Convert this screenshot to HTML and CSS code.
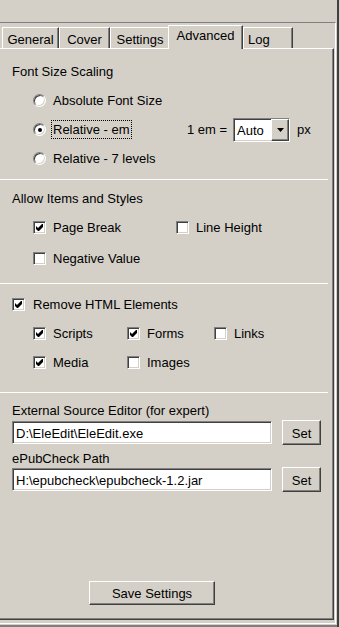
FILE: index.html
```html
<!DOCTYPE html>
<html>
  <head>
    <meta charset="utf-8">
    <title>Advanced Settings</title>
    <link rel="stylesheet" href="styles.css">
  </head>
  <body>
    <div class="window">
      <div class="frame">
        <!-- TABS -->
        <div class="tabs">
          <div class="tab tab-general">General</div>
          <div class="tab tab-cover">Cover</div>
          <div class="tab tab-settings">Settings</div>
          <div class="tab tab-advanced active">Advanced</div>
          <div class="tab tab-log">Log</div>
        </div>
        <!-- PANEL -->
        <div class="panel">
          <!-- FONT SIZE SCALING -->
          <div class="group group-font">
            <div class="group-title">Font Size Scaling</div>
            <div class="options radios">
              <div class="row">
                <div class="opt"><span class="radio"></span><span>Absolute Font Size</span></div>
              </div>
              <div class="row">
                <div class="opt opt-em"><span class="radio checked"></span><span class="focus">Relative - em</span></div>
                <span class="em-label">1 em =</span>
                <div class="em-select">
                  <div class="em-value">Auto</div>
                  <div class="em-arrow">
                    <svg width="7" height="4" viewBox="0 0 7 4"><polygon points="0,0 7,0 3.5,4" fill="#000"/></svg>
                  </div>
                </div>
                <span class="em-unit">px</span>
              </div>
              <div class="row">
                <div class="opt"><span class="radio"></span><span>Relative - 7 levels</span></div>
              </div>
            </div>
          </div>
          <div class="rule"></div>
          <!-- ALLOW ITEMS -->
          <div class="group group-items">
            <div class="group-title">Allow Items and Styles</div>
            <div class="options sub">
              <div class="row row-tall">
                <div class="opt col-wide"><span class="check checked"><svg width="11" height="11" viewBox="0 0 11 11"><polygon points="2,4 4,6 8,2 9,2 9,5 5,9 4,9 2,7" fill="#000"/></svg></span><span>Page Break</span></div>
                <div class="opt"><span class="check"></span><span>Line Height</span></div>
              </div>
              <div class="row row-tall">
                <div class="opt"><span class="check"></span><span>Negative Value</span></div>
              </div>
            </div>
          </div>
          <div class="rule"></div>
          <!-- REMOVE HTML ELEMENTS -->
          <div class="group group-remove">
            <div class="row">
              <div class="opt opt-main"><span class="check checked"><svg width="11" height="11" viewBox="0 0 11 11"><polygon points="2,4 4,6 8,2 9,2 9,5 5,9 4,9 2,7" fill="#000"/></svg></span><span>Remove HTML Elements</span></div>
            </div>
            <div class="sub">
              <div class="row">
                <div class="opt col-a"><span class="check checked"><svg width="11" height="11" viewBox="0 0 11 11"><polygon points="2,4 4,6 8,2 9,2 9,5 5,9 4,9 2,7" fill="#000"/></svg></span><span>Scripts</span></div>
                <div class="opt col-b"><span class="check checked"><svg width="11" height="11" viewBox="0 0 11 11"><polygon points="2,4 4,6 8,2 9,2 9,5 5,9 4,9 2,7" fill="#000"/></svg></span><span>Forms</span></div>
                <div class="opt"><span class="check"></span><span>Links</span></div>
              </div>
              <div class="row">
                <div class="opt col-a"><span class="check checked"><svg width="11" height="11" viewBox="0 0 11 11"><polygon points="2,4 4,6 8,2 9,2 9,5 5,9 4,9 2,7" fill="#000"/></svg></span><span>Media</span></div>
                <div class="opt col-b"><span class="check"></span><span>Images</span></div>
              </div>
            </div>
          </div>
          <div class="rule"></div>
          <!-- PATHS -->
          <div class="group group-paths">
            <div class="path-label">External Source Editor (for expert)</div>
            <div class="path-row">
              <div class="path-input">D:\EleEdit\EleEdit.exe</div>
              <div class="btn btn-set">Set</div>
            </div>
            <div class="path-label path-label-2">ePubCheck Path</div>
            <div class="path-row path-row-2">
              <div class="path-input">H:\epubcheck\epubcheck-1.2.jar</div>
              <div class="btn btn-set">Set</div>
            </div>
          </div>
          <div class="btn btn-save">Save Settings</div>
        </div>
      </div>
      <div class="ledge"></div>
    </div>
  </body>
</html>
```

FILE: styles.css
```css
/* BASE - classic windows look */
html, body { margin: 0; padding: 0; }
body {
  width: 340px;
  height: 627px;
  overflow: hidden;
  background: #d4d0c8;
  color: #000;
  font-family: "Liberation Sans", Arial, sans-serif;
  font-size: 13px;
  line-height: 15px;
}
.window {
  width: 339px;
  height: 627px;
  box-sizing: border-box;
  padding-top: 22px;
  border-right: 2px solid #404040;
}
.frame {
  width: 336px;
  box-sizing: border-box;
  border-top: 1px solid #808080;
  border-right: 1px solid #fff;
  border-bottom: 1px solid #fff;
  padding-bottom: 3px;
}
.ledge {
  margin-top: 1px;
  height: 2px;
  background: #808080;
}
/* TABS */
.tabs {
  display: flex;
  align-items: flex-end;
  height: 25px;
  padding-left: 2px;
}
.tab {
  height: 21px;
  box-sizing: border-box;
  border-top: 1px solid #fff;
  border-left: 1px solid #fff;
  border-right: 1px solid #404040;
  box-shadow: inset -1px 0 #808080;
  padding-top: 4px;
  text-align: center;
  background: #d4d0c8;
}
.tab-general { width: 57px; }
.tab-cover { width: 51px; }
.tab-settings { width: 60px; }
.tab-log { width: 50px; text-align: left; padding-left: 4px; }
.tab.active {
  width: 75px;
  height: 24px;
  margin-left: -2px;
  margin-bottom: -1px;
  padding-top: 2px;
  position: relative;
  z-index: 1;
}
/* PANEL */
.panel {
  width: 334px;
  height: 572px;
  box-sizing: border-box;
  border-top: 1px solid #fff;
  border-right: 1px solid #404040;
  border-bottom: 1px solid #404040;
  box-shadow: inset -1px -1px #808080;
  display: flex;
  flex-direction: column;
}
.rule {
  height: 1px;
  background: #fff;
  margin-right: 5px;
}
.group { padding-left: 12px; }
.group-font { padding-top: 15px; padding-bottom: 6px; }
.group-items { padding-top: 11px; padding-bottom: 9px; }
.group-remove { padding-top: 6px; padding-bottom: 15px; }
.group-paths { padding-top: 10px; }
.options { margin-top: 7px; }
.group-items .options { margin-top: 6px; }
.radios { padding-left: 21px; }
.sub { padding-left: 21px; }
.row {
  display: flex;
  align-items: center;
  height: 29px;
}
.row-tall { height: 31px; }
.opt {
  display: flex;
  align-items: center;
  gap: 7px;
}
.opt-main { gap: 8px; }
.col-wide { width: 143px; }
.col-a { width: 94px; }
.col-b { width: 87px; }
/* RADIO + CHECK */
.radio {
  width: 13px;
  height: 13px;
  box-sizing: border-box;
  border-radius: 50%;
  background: #fff;
  border: 1px solid;
  border-color: #808080 #fff #fff #808080;
  box-shadow: inset 1px 1px #404040, inset -1px -1px #d4d0c8;
  display: flex;
  align-items: center;
  justify-content: center;
  flex: none;
}
.radio.checked::after {
  content: "";
  width: 4px;
  height: 4px;
  border-radius: 50%;
  background: #000;
}
.check {
  width: 13px;
  height: 13px;
  box-sizing: border-box;
  background: #fff;
  border: 1px solid;
  border-color: #808080 #fff #fff #808080;
  box-shadow: inset 1px 1px #404040, inset -1px -1px #d4d0c8;
  flex: none;
}
.check svg { display: block; }
.focus {
  outline: 1px dotted #000;
  outline-offset: 1px;
}
/* EM SELECT */
.opt-em { width: 154px; }
.em-select {
  margin-left: 6px;
  width: 57px;
  height: 24px;
  box-sizing: border-box;
  display: flex;
  background: #fff;
  border: 1px solid;
  border-color: #808080 #fff #fff #808080;
  box-shadow: inset 1px 1px #404040, inset -1px -1px #d4d0c8;
}
.em-value {
  flex: 1;
  padding: 4px 0 0 3px;
}
.em-arrow {
  width: 18px;
  box-sizing: border-box;
  border: 1px solid;
  border-color: #fff #404040 #404040 #fff;
  box-shadow: inset -1px -1px #808080;
  background: #d4d0c8;
  display: flex;
  align-items: center;
  justify-content: center;
}
.em-unit { margin-left: 7px; }
/* PATHS */
.path-row {
  display: flex;
  align-items: center;
  gap: 10px;
  margin-top: 2px;
  height: 25px;
}
.path-row-2 { margin-top: 1px; }
.path-label-2 { margin-top: 6px; }
.path-input {
  width: 260px;
  height: 23px;
  box-sizing: border-box;
  background: #fff;
  border: 1px solid;
  border-color: #808080 #fff #fff #808080;
  box-shadow: inset 1px 1px #404040, inset -1px -1px #d4d0c8;
  padding: 4px 0 0 3px;
  white-space: nowrap;
}
/* BUTTONS */
.btn {
  box-sizing: border-box;
  border: 1px solid;
  border-color: #fff #404040 #404040 #fff;
  box-shadow: inset -1px -1px #808080;
  background: #d4d0c8;
  display: flex;
  align-items: center;
  justify-content: center;
}
.btn-set {
  width: 39px;
  height: 25px;
  padding-top: 2px;
}
.btn-save {
  width: 126px;
  height: 24px;
  margin: auto 0 14px 89px;
}
```
